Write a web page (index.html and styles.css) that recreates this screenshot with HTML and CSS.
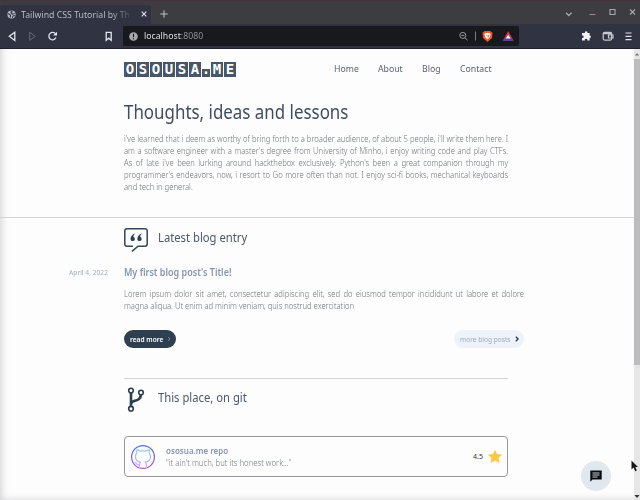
FILE: index.html
```
<!DOCTYPE html>
<html lang="en">
<head>
<meta charset="utf-8">
<title>Tailwind CSS Tutorial</title>
<link rel="stylesheet" href="styles.css">
</head>
<body>
<div class="window">
  <div class="tabstrip">
    <div class="tab">
      <svg class="globe" viewBox="0 0 10 10"><circle cx="5" cy="5" r="4.5" fill="#b9bcc5"/><path d="M1 4L3 5L4 6L3.5 8.5M4 1.2L5.7 2L4.4 3.3L6 4.7L8.5 4M6 8.6L6.6 6.7L8.8 6.2" fill="none" stroke="#303342" stroke-width="1.2"/></svg>
      <span class="tab-title">Tailwind CSS Tutorial by Th</span>
      <svg class="x" viewBox="0 0 6 6"><path d="M.7.7L5.3 5.3M5.3.7L.7 5.3" stroke="#e2e3e8" stroke-width="1.1"/></svg>
    </div>
    <svg class="plus" viewBox="0 0 8 8"><path d="M4 .3V7.7M.3 4H7.7" stroke="#c3c3c8"/></svg>
    <svg class="winctl" viewBox="0 0 74 12"><g fill="none" stroke="#aaa6ad" stroke-width="1.1"><path d="M2 6.7L4.8 9.5L7.6 6.7" stroke-width="1.3"/><path d="M25.5 8.5H31.5" stroke="#9c8794"/><path d="M46 3.5H51V8.5H46Z"/><path d="M66 3.5L71 8.5M71 3.5L66 8.5"/></g></svg>
  </div>
  <div class="toolbar">
    <svg class="navicons" viewBox="0 0 123 25"><g fill="none" stroke="#e3e5ea" stroke-width="1.3"><path d="M14.8 8.2V16.4L9.3 12.3Z"/><path d="M29.7 8.2V16.4L35.2 12.3Z" stroke="#656979" stroke-width="1"/><path d="M55.6 10A3.7 3.7 0 1 0 56 13.6"/><path d="M106.2 8.3H111.2V16.3L108.7 14.2L106.2 16.3Z"/></g><path d="M57 7.7V11.6H53Z" fill="#e3e5ea"/></svg>
    <div class="urlbar">
      <svg class="info" viewBox="0 0 9 9"><circle cx="4.5" cy="4.5" r="4.3" fill="#a7a8ad"/><path d="M4.5 1.8V5.2M4.5 6.2V7.3" stroke="#17191d" stroke-width="1.1"/></svg>
      <span class="url">localhost<i>:8080</i></span>
      <svg class="urlicons" viewBox="0 0 60 16"><g fill="none" stroke="#9a9ca1"><circle cx="4.8" cy="7.4" r="3"/><path d="M7 9.8L9.5 12.2M3.3 7.4H6.3"/><path d="M17.5 3.5V12.5" stroke="#777980"/></g><path d="M26.5 3L32 3L34.5 4.7L34 10L29.5 14L25 10L24.5 4.7Z" fill="#f05527"/><path d="M26.5 5.5L29.5 4.8L32.5 5.5L32 9L29.5 11.5L27 9Z" fill="#fff"/><path d="M28 7L29.5 8L31 7L29.8 10.2" fill="none" stroke="#f05527" stroke-width=".7"/><path d="M50.2 3L55.7 12.8H44.7Z" fill="#d9344e"/><path d="M47.6 9.8L44.7 12.8H55.7L52.8 9.8Z" fill="#5144a8"/><path d="M50.2 6.8L52.6 10.6H47.8Z" fill="#fff"/></svg>
    </div>
    <svg class="exticons" viewBox="0 0 60 16"><path d="M4.5 5H7A1.3 1.3 0 1 1 9.4 5H11.6V7.4A1.3 1.3 0 1 1 11.6 10V12.6H9.3A1.3 1.3 0 1 0 6.9 12.6H4V10A1.3 1.3 0 1 0 4 7.5V5Z" fill="#f4f5f7"/><g fill="none" stroke="#c6c9d0" stroke-width="1.2"><rect x="25.2" y="4.3" width="8.5" height="7.8" rx="1.5"/><path d="M25.2 5.7H33.5M35 7H30.5V10H35Z"/><path d="M47.5 5H53.5M47.5 8.3H53.5M47.5 11.6H53.5" stroke="#e0e2e7"/></g></svg>
  </div>
  <div class="view">
    <div class="page">
      <header class="top">
        <div class="logo"><b>O</b><b>S</b><b>O</b><b>U</b><b>S</b><b>A</b><b class="dot">.</b><b>M</b><b>E</b></div>
        <nav><a class="n1">Home</a><a class="n2">About</a><a class="n3">Blog</a><a>Contact</a></nav>
      </header>
      <section class="intro">
        <h1>Thoughts, ideas and lessons</h1>
        <p class="copy">
          <span>i've learned that i deem as worthy of bring forth to a broader audience, of about 5 people, i'll write them here. I</span>
          <span>am a software engineer with a master's degree from University of Minho, i enjoy writing code and play CTFs.</span>
          <span>As of late i've been lurking around hackthebox exclusively. Python's been a great companion through my</span>
          <span>programmer's endeavors, now, i resort to Go more often than not. I enjoy sci-fi books, mechanical keyboards</span>
          <span class="last">and tech in general.</span>
        </p>
      </section>
      <section class="blog">
        <div class="heading">
          <svg class="quote" viewBox="0 0 24 24"><path d="M9 18.2H3Q.8 18.2.8 16V3Q.8.8 3 .8H21Q23.2.8 23.2 3V16Q23.2 18.2 21 18.2H14L8 23.4" fill="none" stroke="#34465a" stroke-width="1.5"/><path d="M11.5 5.3C8.3 6.3 6.5 8.5 6.5 11.2A2.2 2.2 0 1 0 9.3 8.8C9.6 7.5 10.2 6.5 11.5 5.3ZM18.3 5.3C15.1 6.3 13.3 8.5 13.3 11.2A2.2 2.2 0 1 0 16.1 8.8C16.4 7.5 17 6.5 18.3 5.3Z" fill="#2c3e50"/></svg>
          <h2>Latest blog entry</h2>
        </div>
        <div class="entry">
          <time>April 4, 2022</time>
          <div class="post">
            <h3>My first blog post's Title!</h3>
            <p class="copy">
              <span>Lorem ipsum dolor sit amet, consectetur adipiscing elit, sed do eiusmod tempor incididunt ut labore et dolore</span>
              <span class="last">magna aliqua. Ut enim ad minim veniam, quis nostrud exercitation</span>
            </p>
            <div class="buttons">
              <a class="pill dark"><span>read more</span><svg viewBox="0 0 4 6"><path d="M1 1L3 3L1 5" fill="none" stroke="#8795a5" stroke-width=".8"/></svg></a>
              <a class="pill light"><span>more blog posts</span><svg viewBox="0 0 4 6"><path d="M.8.7L3.1 3L.8 5.3" fill="none" stroke="#27384a" stroke-width="1.3"/></svg></a>
            </div>
          </div>
        </div>
      </section>
      <section class="git">
        <div class="heading">
          <svg class="branch" viewBox="0 0 24 26"><g fill="none" stroke="#2c3e50"><path d="M7 5V20M17 7C17 12 14 13 10 14Q7.5 14.7 7 17" stroke-width="2.6"/><g fill="#fff" stroke-width="1.6"><circle cx="7" cy="3.6" r="2.3"/><circle cx="17" cy="5.6" r="2.3"/><circle cx="7" cy="21.7" r="2.3"/></g></g></svg>
          <h2>This place, on git</h2>
        </div>
        <div class="card">
          <svg class="cat" viewBox="0 0 26 26"><defs><linearGradient id="g" x1="0" y1="0" x2="0" y2="1"><stop offset="0" stop-color="#4a72e8"/><stop offset=".5" stop-color="#7463df"/><stop offset="1" stop-color="#c04be0"/></linearGradient><linearGradient id="h" x1="0" y1="0" x2="0" y2="1"><stop offset="0" stop-color="#8acdf5"/><stop offset=".6" stop-color="#aab9f2"/><stop offset="1" stop-color="#ddb0ef"/></linearGradient></defs><circle cx="13" cy="13" r="11.4" fill="none" stroke="url(#g)" stroke-width="1.2"/><path d="M9.5 24V20.8C6.5 21.4 6.8 18.7 4.8 18.3M9.5 20.8C9.5 19.5 10 18.8 10.6 18.2C7.5 17.8 5.5 16.3 5.5 12.5C5.5 11 6 9.8 6.9 8.9C6.5 7.8 6.6 6.6 7 5.8C8.4 5.8 9.6 6.7 10.3 7.2C12 6.8 14 6.8 15.7 7.2C16.4 6.7 17.6 5.8 19 5.8C19.4 6.6 19.5 7.8 19.1 8.9C20 9.8 20.5 11 20.5 12.5C20.5 16.3 18.5 17.8 15.4 18.2C16.2 18.8 16.5 19.7 16.5 21V24" fill="none" stroke="url(#h)" stroke-width="1.2"/></svg>
          <div class="repo"><strong>ososua.me repo</strong><span>"it ain't much, but its honest work..."</span></div>
          <span class="rate">4.5</span>
          <svg class="star" viewBox="0 0 14 13"><path d="M7 .5L8.9 4.4L13.5 4.9L10.2 7.9L11.1 12.4L7 10.2L2.9 12.4L3.8 7.9L.5 4.9L5.1 4.4Z" fill="#fbc844" stroke="#fbc844" stroke-width=".7" stroke-linejoin="round"/></svg>
        </div>
      </section>
    </div>
    <div class="scrollbar"><svg viewBox="0 0 6 10"><path d="M.8 6.5L3 4L5.2 6.5Z" fill="#777"/></svg><div class="thumb"></div><svg class="down" viewBox="0 0 6 10"><path d="M.5 5L3 8L5.5 5Z" fill="#333"/></svg></div>
    <div class="chat"><svg viewBox="0 0 12 12"><path d="M.3.5H11.7V9.5H2.5L.3 11.7Z" fill="#080b10"/><path d="M2.5 3H9.5M2.5 5H9.5M2.5 7H7.5" stroke="#dce1e8" stroke-width=".9"/></svg></div>
    <svg class="cursor" viewBox="0 0 8 12"><path d="M.5.5V9.5L2.6 7.6L4.2 11.2L5.8 10.5L4.3 7H7Z" fill="#151515"/></svg>
  </div>
</div>
</body>
</html>
```
FILE: styles.css
```
* { box-sizing: border-box; }
body { margin: 0; font-family: "Noto Sans", sans-serif; background: #fdfdfd; overflow: hidden; }
svg { display: block; flex: none; }
h1, h2, h3, p { margin: 0; }
h1, h2, h3, .copy, .tab-title, .url, nav a, .pill span, .repo strong, .repo span { transform-origin: left center; }
.window { width: 640px; height: 500px; display: flex; flex-direction: column; }
.tabstrip { height: 24px; flex: none; background: #3d3c41; border-top: 1px solid #45323b; display: flex; }
.tab { width: 151px; margin-top: 4px; background: #303342; display: flex; align-items: center; padding: 0 7px 1px; border-radius: 3px 3px 0 0; }
.globe { width: 9px; height: 9px; margin-right: 5px; }
.tab-title { width: 119px; flex: none; font-size: 9.5px; white-space: nowrap; color: transparent; background: linear-gradient(90deg, #c1c3cc 82%, #44475a); -webkit-background-clip: text; background-clip: text; transform: scaleX(.92); }
.x { width: 6px; height: 6px; margin-left: 1px; }
.plus { width: 8px; height: 8px; margin: 9px 0 0 9px; }
.winctl { width: 74px; height: 12px; margin: 5px 2px 0 auto; }
.toolbar { height: 25px; flex: none; background: #303342; border-bottom: 1px solid #20222e; display: flex; }
.navicons { width: 123px; height: 25px; }
.urlbar { width: 396px; height: 20px; margin-top: 2px; background: #17191d; border-radius: 2px; display: flex; align-items: center; padding-left: 6px; }
.info { width: 9px; height: 9px; margin-right: 6px; }
.url { font-size: 9.4px; line-height: 12px; color: #dcdde0; transform: scaleX(.93); }
.url i { font-style: normal; color: #8f9196; }
.urlicons { width: 60px; height: 16px; margin-left: auto; margin-right: 1px; }
.exticons { width: 60px; height: 16px; margin: 4px 0 0 59px; }
.view { position: relative; flex: 1; display: flex; min-height: 0; background: #fdfdfd; }
.page { width: 634px; box-shadow: inset 7px 0 7px -5px #d5d5d7, inset 0 -7px 7px -6px #dedee0; }
.top { height: 39px; display: flex; align-items: center; padding-left: 124px; }
.logo { display: flex; gap: 1px; width: 210px; margin-top: 1px; }
.logo b { width: 12px; height: 15px; background: #46566b; color: #fff; font: bold 14px/15px "DejaVu Sans Mono", monospace; text-align: center; }
.logo .dot { width: 8px; background: linear-gradient(#fdfdfd 45%, #46566b 45%); display: flex; justify-content: center; }
nav { display: flex; font-size: 9.6px; line-height: 14px; color: #566376; }
nav a { white-space: nowrap; transform: scaleX(.91); }
.n1 { width: 44px; }
.n2 { width: 44px; }
.n3 { width: 38px; }
.intro { height: 130px; padding: 11px 0 0 124px; border-bottom: 1px solid #d3d4d6; }
h1 { font-size: 19px; line-height: 26px; font-weight: 400; color: #3f4d62; white-space: nowrap; transform: scaleX(.89); }
.copy { font-size: 9px; line-height: 12px; font-weight: 300; color: #6d727a; transform: scaleX(.85); }
.intro .copy { width: 452px; margin-top: 8px; }
.copy span { display: block; white-space: nowrap; text-align: justify; text-align-last: justify; }
.copy .last { text-align-last: left; }
.blog { height: 160px; padding-top: 9px; }
.heading { display: flex; padding-left: 124px; }
.quote { width: 24px; height: 24px; margin: 1px 10px 0 0; }
h2 { font-size: 13px; line-height: 20px; font-weight: 400; color: #4b586b; white-space: nowrap; transform: scaleX(.865); }
.entry { display: flex; margin-top: 13px; }
time { width: 108px; text-align: right; font-size: 7.7px; line-height: 14px; color: #a0aec1; transform: scaleX(.87); transform-origin: right center; }
.post { width: 400px; margin-left: 16px; }
h3 { font-size: 10px; line-height: 15px; font-weight: 600; color: #8495b1; transform: scaleX(.9); }
.post .copy { width: 470.6px; margin-top: 8px; }
.buttons { display: flex; justify-content: space-between; margin-top: 18px; }
.pill { height: 18px; border-radius: 9px; display: flex; align-items: center; padding: 0 5px 0 6px; font-size: 7.6px; white-space: nowrap; }
.pill span { width: 0; flex: 1; transform: scaleX(.87); }
.pill svg { width: 4px; height: 6px; }
.dark { width: 52px; background: #2f3f52; color: #fff; font-weight: 600; }
.light { width: 70px; background: #edf3f8; color: #9aabc3; }
.git { width: 384px; margin-left: 124px; border-top: 1px solid #d3d4d6; padding-top: 8px; }
.git .heading { padding-left: 0; }
.branch { width: 24px; height: 26px; margin-right: 10px; }
.card { height: 41px; margin-top: 23px; border: 1px solid #96999e; border-radius: 4px; display: flex; align-items: center; padding: 0 5px; }
.cat { width: 26px; height: 26px; margin-right: 10px; }
.repo { display: flex; flex-direction: column; font-size: 9px; line-height: 12px; font-weight: 300; color: #747a83; white-space: nowrap; }
.repo strong { font-weight: 600; color: #8796ad; transform: scaleX(.89); }
.repo span { transform: scaleX(.86); }
.rate { font-size: 7px; color: #303743; margin-left: auto; margin-right: 5px; }
.star { width: 14px; height: 13px; }
.scrollbar { width: 6px; background: #e6e6e7; display: flex; flex-direction: column; }
.scrollbar svg { width: 6px; height: 10px; }
.thumb { height: 306px; background: #bcbcbe; }
.scrollbar .down { margin-top: auto; }
.chat { position: absolute; left: 581px; top: 412px; width: 30px; height: 30px; border-radius: 50%; background: #e1e7ee; display: flex; align-items: center; justify-content: center; }
.chat svg { width: 12px; height: 12px; }
.cursor { position: absolute; left: 631px; top: 411px; width: 8px; height: 12px; }
```
